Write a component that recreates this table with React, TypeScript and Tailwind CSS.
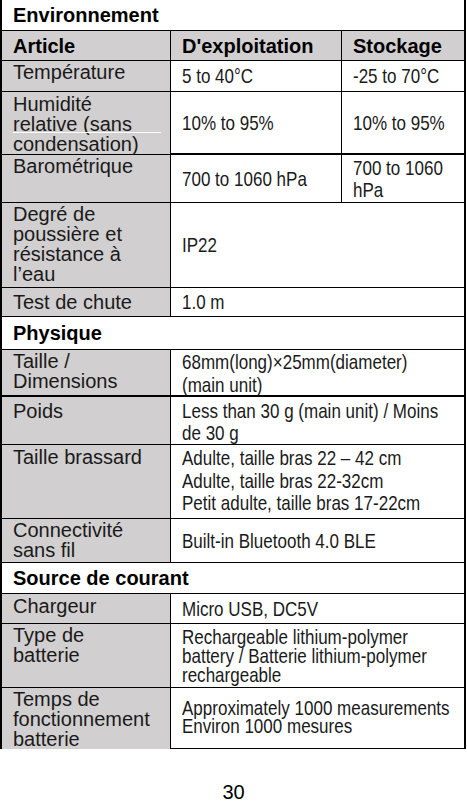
import React from 'react'

const label = "font-['Liberation_Sans',Arial,sans-serif] text-[20px] leading-[20px] text-[#1a1a1a]"
const gray = 'bg-[#d1cfd0]'

// the values are set in a narrow face; no narrow font here, so squeeze Liberation Sans
function V({ lines, lh = 'leading-[22px]', cls = '' }: { lines: string[]; lh?: string; cls?: string }) {
  return (
    <div className={`overflow-hidden pl-[11px] flex flex-col font-['Liberation_Sans',Arial,sans-serif] text-[21px] text-[#1a1a1a] ${lh} ${cls}`}>
      {lines.map((l) => (
        <span key={l} className="block whitespace-nowrap origin-left scale-x-[0.81]">
          {l}
        </span>
      ))}
    </div>
  )
}

function Section({ title, h }: { title: string; h: string }) {
  return (
    <div className={`${h} border-b border-black flex items-center pl-[11px]`}>
      <span className="font-['Liberation_Sans',Arial,sans-serif] font-bold text-[20px] leading-[20px] text-black">
        {title}
      </span>
    </div>
  )
}

function Row({
  h,
  name,
  children,
  cls = 'border-b border-black',
}: {
  h: string
  name: React.ReactNode
  children: React.ReactNode
  cls?: string
}) {
  return (
    <div className={`${h} ${cls} grid grid-cols-[169px_1fr]`}>
      <div className={`${gray} border-r border-black pl-[11px] pt-[1px] ${label}`}>{name}</div>
      {children}
    </div>
  )
}

export default function App() {
  return (
    <div className="w-[467px] h-[801px] bg-white overflow-hidden">
      <div className="w-[466px] border-x-2 border-black">
        <Section title="Environnement" h="h-[31px]" />

        {/* column header */}
        <div className={`h-[30px] border-b border-black grid grid-cols-[169px_171px_1fr] ${gray} font-['Liberation_Sans',Arial,sans-serif] font-bold text-[20px] text-black`}>
          <div className="border-r border-black pl-[11px] flex items-center">Article</div>
          <div className="border-r border-black pl-[11px] flex items-center">D'exploitation</div>
          <div className="pl-[11px] flex items-center">Stockage</div>
        </div>

        <div className="h-[31px] border-b border-black grid grid-cols-[169px_171px_1fr]">
          <div className={`${gray} border-r border-black pl-[11px] pt-[1px] ${label}`}>Température</div>
          <V cls="border-r border-black justify-center" lines={['5 to 40°C']} />
          <V cls="justify-center" lines={['-25 to 70°C']} />
        </div>

        <div className="h-[63px] border-b-2 border-black grid grid-cols-[169px_171px_1fr]">
          <div className={`relative ${gray} border-r border-black pl-[11px] pt-[2px] ${label}`}>
            Humidité
            <br />
            relative (sans
            <br />
            condensation)
            <div className="absolute left-[11px] top-[40px] w-[148px] h-[1px] bg-white" />
          </div>
          <V cls="border-r border-black justify-center" lines={['10% to 95%']} />
          <V cls="justify-center" lines={['10% to 95%']} />
        </div>

        <div className="h-[48px] border-b border-black grid grid-cols-[169px_171px_1fr]">
          <div className={`${gray} border-r border-black pl-[11px] pt-[1px] ${label}`}>Barométrique</div>
          <V cls="border-r border-black justify-center" lines={['700 to 1060 hPa']} />
          <V cls="justify-center" lines={['700 to 1060', 'hPa']} />
        </div>

        <Row h="h-[85px]" name={<>Degré de<br />poussière et<br />résistance à<br />l’eau</>}>
          <V cls="justify-center" lines={['IP22']} />
        </Row>

        <Row h="h-[29px]" name={<div className="pt-[3px]">Test de chute</div>}>
          <V cls="justify-center" lines={['1.0 m']} />
        </Row>

        <Section title="Physique" h="h-[33px]" />

        <Row h="h-[47px]" cls="border-b-2 border-black" name={<>Taille /<br />Dimensions</>}>
          <V lh="leading-[23px]" cls="pt-[0px]" lines={['68mm(long)×25mm(diameter)', '(main unit)']} />
        </Row>

        <Row h="h-[48px]" name={<div className="pt-[3px]">Poids</div>}>
          <V cls="pt-[3px]" lines={['Less than 30 g (main unit) / Moins', 'de 30 g']} />
        </Row>

        <Row h="h-[74px]" name={<div className="pt-[1px]">Taille brassard</div>}>
          <V
            lh="leading-[22.5px]"
            cls="pt-[2px]"
            lines={['Adulte, taille bras 22 – 42 cm', 'Adulte, taille bras 22-32cm', 'Petit adulte, taille bras 17-22cm']}
          />
        </Row>

        <Row h="h-[44px]" name={<>Connectivité<br />sans fil</>}>
          <V cls="justify-center" lines={['Built-in Bluetooth 4.0 BLE']} />
        </Row>

        <Section title="Source de courant" h="h-[31px]" />

        <Row h="h-[30px]" name={<div className="pt-[1px]">Chargeur</div>}>
          <V cls="justify-center" lines={['Micro USB, DC5V']} />
        </Row>

        <Row h="h-[64px]" name={<>Type de<br />batterie</>}>
          <V
            lh="leading-[19px]"
            cls="pt-[3px]"
            lines={['Rechargeable lithium-polymer', 'battery / Batterie lithium-polymer', 'rechargeable']}
          />
        </Row>

        <Row h="h-[61px]" name={<>Temps de<br />fonctionnement<br />batterie</>}>
          <V
            lh="leading-[18px]"
            cls="justify-center pb-[4px]"
            lines={['Approximately 1000 measurements', 'Environ 1000 mesures']}
          />
        </Row>
      </div>

      <div className="mt-[35px] text-center font-['Liberation_Sans',Arial,sans-serif] text-[20px] leading-[16px] text-black">
        30
      </div>
    </div>
  )
}
